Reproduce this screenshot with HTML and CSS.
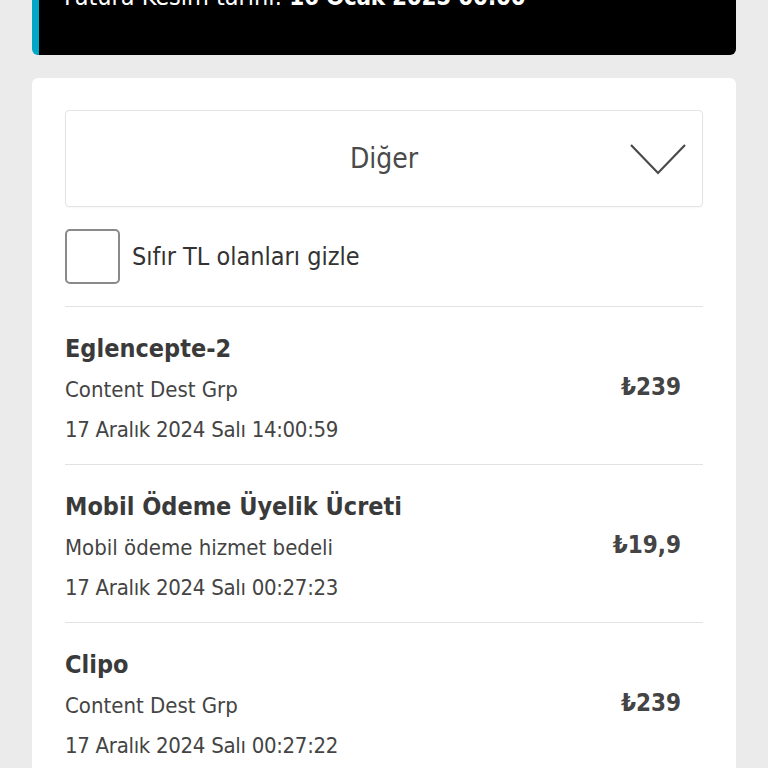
FILE: index.html
```html
<!DOCTYPE html>
<html lang="tr">
<head>
  <meta charset="UTF-8" />
  <meta name="viewport" content="width=device-width, initial-scale=1.0" />
  <title>Fatura Detayı</title>
  <link rel="stylesheet" href="styles.css">
</head>
<body>
  <div class="page">
    <div class="bill-card">
      <span>Fatura Kesim tarihi: </span><strong>16 Ocak 2025 00:00</strong>
    </div>

    <div class="list-card">
      <div class="select-box">
        <span class="select-label">Diğer</span>
        <svg class="chevron" width="58" height="34" viewBox="0 0 58 34">
          <polyline points="2,3 29,31 56,3" fill="none" stroke="#4a4a4a" stroke-width="2.2" />
        </svg>
      </div>

      <label class="hide-zero">
        <span class="check"></span>
        Sıfır TL olanları gizle
      </label>

      <div class="items">
        <div class="item">
          <div class="item-info">
            <div class="item-title">Eglencepte-2</div>
            <div class="item-sub">Content Dest Grp</div>
            <div class="item-sub item-date">17 Aralık 2024 Salı 14:00:59</div>
          </div>
          <div class="item-price">₺239</div>
        </div>
        <div class="item">
          <div class="item-info">
            <div class="item-title">Mobil Ödeme Üyelik Ücreti</div>
            <div class="item-sub">Mobil ödeme hizmet bedeli</div>
            <div class="item-sub item-date">17 Aralık 2024 Salı 00:27:23</div>
          </div>
          <div class="item-price">₺19,9</div>
        </div>
        <div class="item">
          <div class="item-info">
            <div class="item-title">Clipo</div>
            <div class="item-sub">Content Dest Grp</div>
            <div class="item-sub item-date">17 Aralık 2024 Salı 00:27:22</div>
          </div>
          <div class="item-price">₺239</div>
        </div>
      </div>
    </div>
  </div>
</body>
</html>
```

FILE: styles.css
```css
body {
  margin: 0;
  background-color: #ebebeb;
  font-family: "DejaVu Sans Condensed", "DejaVu Sans", sans-serif;
  color: #333;
  overflow: hidden;
}
.page {
  padding: 0 32px;
}
.bill-card {
  margin-top: -40px;
  padding: 17px 24px 38px 25px;
  line-height: 40px;
  font-size: 25px;
  color: #fff;
  background-color: #000;
  border-left: 7px solid #00a7c6;
  border-radius: 0 0 6px 6px;
}
.bill-card strong {
  font-size: 24px;
  letter-spacing: -0.3px;
}
.list-card {
  margin-top: 23px;
  padding: 32px 33px 0 33px;
  background-color: #fff;
  border-radius: 6px;
}
.select-box {
  position: relative;
  display: flex;
  align-items: center;
  justify-content: center;
  height: 95px;
  border: 1px solid #e4e4e4;
  border-radius: 4px;
  box-shadow: 0 1px 2px rgba(0, 0, 0, 0.04);
}
.select-label {
  font-size: 28px;
  color: #4a4a4a;
}
.chevron {
  position: absolute;
  right: 15px;
  top: 31px;
}
.hide-zero {
  display: flex;
  align-items: center;
  gap: 12px;
  margin-top: 22px;
  font-size: 25px;
  color: #333;
}
.check {
  width: 51px;
  height: 51px;
  border: 2px solid #8a8a8a;
  border-radius: 5px;
}
.items {
  margin-top: 22px;
  border-top: 1px solid #e2e2e2;
}
.item {
  display: flex;
  align-items: center;
  justify-content: space-between;
  padding: 20px 22px 14px 0;
  border-bottom: 1px solid #e2e2e2;
}
.item-title {
  font-size: 25px;
  font-weight: bold;
  line-height: 43px;
  color: #3a3a3a;
}
.item-sub {
  font-size: 22px;
  line-height: 40px;
  color: #444;
}
.item-date {
  letter-spacing: -0.3px;
}
.item-price {
  margin-bottom: 4px;
  font-size: 24px;
  font-weight: bold;
  color: #444;
}
```
